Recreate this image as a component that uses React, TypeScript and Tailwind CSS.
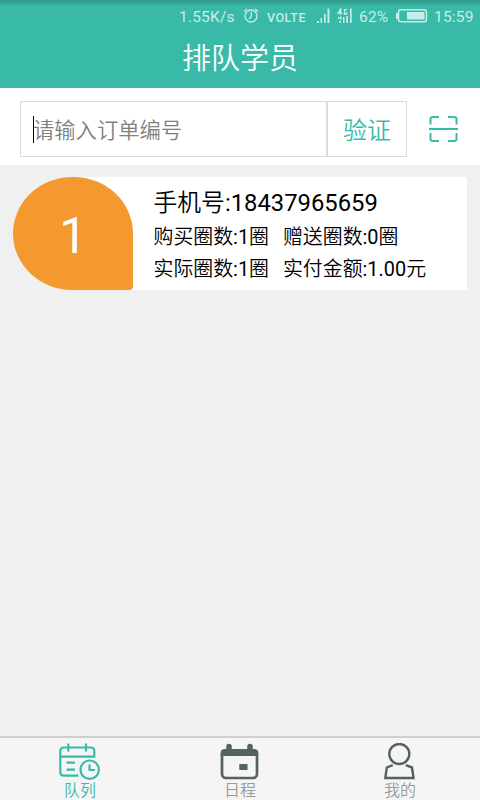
import type { ReactNode } from 'react';

interface Student {
  order: number;
  phone: string;
  bought: number;
  gifted: number;
  actual: number;
  paid: string;
}

const STUDENTS: Student[] = [
  { order: 1, phone: '18437965659', bought: 1, gifted: 0, actual: 1, paid: '1.00' },
];

function StatusBar() {
  return (
    <div className="flex h-8 items-center bg-linear-to-b from-[#2f9585] to-[#39baa9] to-20% pl-[179px] text-[15.5px] leading-8 text-[#c8ece6]">
      <span className="w-[64px] whitespace-nowrap pt-px tracking-[0.2px]">1.55K/s</span>
      {/* 闹钟 */}
      <svg className="h-4 w-4 shrink-0" viewBox="0 0 16 16" fill="none" stroke="currentColor" strokeWidth="1.3">
        <circle cx="8" cy="8" r="6" />
        <path d="M8.300 4V8.500L6 11M1 3.500 4 1M12 1 15 3.500" />
      </svg>
      <span className="ml-2 w-[50px] whitespace-nowrap pt-[3px] text-[12.5px] font-medium tracking-[0.5px]">VOLTE</span>
      {/* 信号 */}
      <svg className="h-4 w-[13px] shrink-0" viewBox="0 0 13 16" fill="currentColor">
        <path d="M0 13h2v2H0zM3.500 10h1.500v5H3.500zM7 6h1.700v9H7zM10.500 0.500h1.900v14.500h-1.900z" />
      </svg>
      <svg className="ml-[7px] h-4 w-4 shrink-0" viewBox="0 0 16 16" fill="currentColor">
        <path d="M1 9h1.5v2H1zM3 8.500h1.500v3H3zM2 13h2v1.500H2zM6 9h1.500v6H6zM9.300 8h1.700v7H9.300zM13 0.500h1.700v14.500H13z" />
        <path d="M3.700 7V1L1 5H5M10 1.700H7.500V6H9.700V4.200" fill="none" stroke="currentColor" strokeWidth="1.300" />
      </svg>
      <span className="ml-[6px] w-[37px] whitespace-nowrap pt-px tracking-[0.2px]">62%</span>
      {/* 电池 */}
      <svg className="h-[14px] w-8 shrink-0" viewBox="0 0 32 14">
        <rect x="2.500" y="0.800" width="28" height="12" rx="2.500" fill="none" stroke="currentColor" strokeWidth="1.500" />
        <path d="M0 4h2v6H0z" fill="currentColor" />
        <path d="M11 3h17.500v7.500H11z" fill="currentColor" />
      </svg>
      <span className="ml-[6px] whitespace-nowrap pt-px tracking-[0.2px]">15:59</span>
    </div>
  );
}

function SearchBar() {
  return (
    <div className="flex h-[77px] items-start bg-white pl-5 pt-[13px]">
      <div className="flex h-14 w-[307px] items-center border border-[#dcdada] pl-3">
        <span className="h-[27px] w-px bg-black" />
        <span className="-ml-px pt-[3px] text-[21.3px] font-[350] leading-none text-[#808080]">请输入订单编号</span>
      </div>
      <button className="h-14 w-20 border border-[#dcdada] pt-[3px] text-[24px] font-[350] leading-none text-[#39baa9]">
        验证
      </button>
      {/* 扫码 */}
      <svg className="ml-[22px] mt-[14px] h-[28px] w-[29px]" viewBox="0 0 29 28" fill="none" stroke="#39baa9" strokeWidth="2">
        <path d="M1.500 9.500V4Q1.500 2 4 2H10M19 2H25Q27.500 2 27.500 4V9.500M0 14H29M1.500 18V24Q1.500 26 4 26H10M19 26H25Q27.500 26 27.500 24V18" />
      </svg>
    </div>
  );
}

function StudentCard({ student }: { student: Student }) {
  return (
    <div className="mx-[13px] mt-3 flex h-[113px] bg-linear-to-r from-[#f0f0f0] from-[60px] to-white to-[60px]">
      <div className="flex w-[120px] items-center justify-center rounded-[60px_60px_4px_60px/57px_57px_4px_57px] bg-[#f3992f] pt-[5px] text-[50px] leading-none text-white">
        {student.order}
      </div>
      <div className="pl-[20.5px] pt-[10px] text-black">
        <div className="h-[33px] text-[23.8px] leading-8">手机号:{student.phone}</div>
        <div className="flex h-8 gap-[14px] text-[19.9px] leading-[36px]">
          <span>购买圈数:{student.bought}圈</span>
          <span>赠送圈数:{student.gifted}圈</span>
        </div>
        <div className="flex h-8 gap-[14px] text-[19.9px] leading-[36px]">
          <span>实际圈数:{student.actual}圈</span>
          <span>实付金额:{student.paid}元</span>
        </div>
      </div>
    </div>
  );
}

function QueueIcon() {
  return (
    <svg className="h-[38px] w-[42px] shrink-0" viewBox="0 0 42 38" fill="none" stroke="#39baa9" strokeWidth="2.2">
      <path d="M19.500 32.700H5Q1.300 32.700 1.300 29.500V8Q1.300 4.500 5 4.500H31.500Q35.300 4.500 35.300 8V13.700H1.500M9.300 0.500V8.500M27 0.500V8.500M7.500 19.700H16M7.500 26.700H16" />
      <circle cx="30.700" cy="26.700" r="9.200" />
      <path d="M30.500 21.500V27H36" />
    </svg>
  );
}

function ScheduleIcon() {
  return (
    <svg className="h-[38px] w-[42px] shrink-0" viewBox="0 0 42 38">
      <rect x="3" y="7.500" width="35" height="27.500" rx="4" fill="none" stroke="#566260" strokeWidth="2.700" />
      <path d="M1.700 13V9.500Q1.700 6 6 6H35Q39.300 6 39.300 9.500V13zM20.300 21H28.500V27H20.300z" fill="#566260" />
      <path d="M10 3.500V9M31 3.500V9" stroke="#566260" strokeWidth="5.500" strokeLinecap="round" />
    </svg>
  );
}

function MineIcon() {
  return (
    <svg className="h-[38px] w-[42px] shrink-0" viewBox="0 0 42 38" fill="none" stroke="#566260" strokeWidth="2.400">
      <circle cx="20.300" cy="11" r="10" />
      <path d="M13.800 22.200 7.800 24.500 6.300 35H34.500L33 24.500 26.800 22.200" />
    </svg>
  );
}

function Tab({ label, active = false, children }: { label: string; active?: boolean; children: ReactNode }) {
  return (
    <div className={`flex flex-1 flex-col items-center pt-[5px] text-[16px] font-[350] leading-[19px] ${active ? 'text-[#39baa9]' : 'text-[#999]'}`}>
      {children}
      <span>{label}</span>
    </div>
  );
}

export default function App() {
  return (
    <div className="flex h-[800px] w-[480px] flex-col overflow-hidden bg-[#f0f0f0] font-[Roboto,'Noto_Sans_CJK_SC_DemiLight','Noto_Sans_CJK_SC',sans-serif]">
      <StatusBar />
      <header className="h-14 bg-[#39baa9] text-center text-[29px] font-[350] leading-[55px] text-white">排队学员</header>
      <SearchBar />
      <main className="flex-1">
        {STUDENTS.map((student) => (
          <StudentCard key={student.order} student={student} />
        ))}
      </main>
      <nav className="flex h-16 border-t-2 border-[#cfcfcf] bg-[#f5f5f5]">
        <Tab label="队列" active>
          <QueueIcon />
        </Tab>
        <Tab label="日程">
          <ScheduleIcon />
        </Tab>
        <Tab label="我的">
          <MineIcon />
        </Tab>
      </nav>
    </div>
  );
}
